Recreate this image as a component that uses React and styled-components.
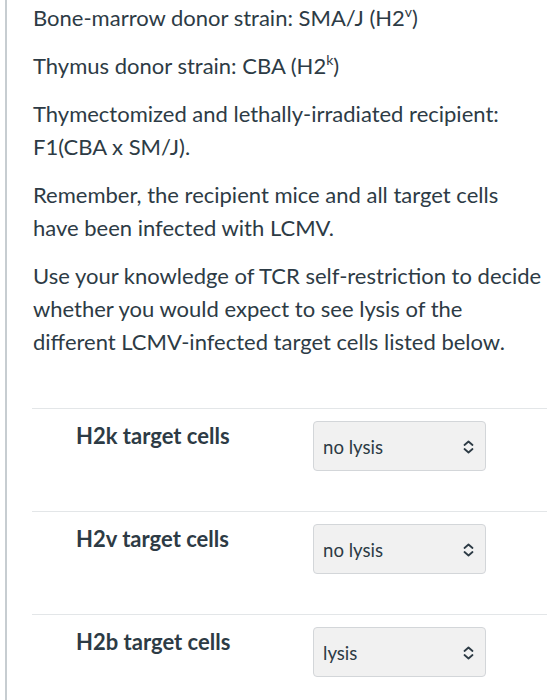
import React from "react";
import styled, { createGlobalStyle } from "styled-components";

const Global = createGlobalStyle`
  html, body { margin: 0; padding: 0; background: #ffffff; }
  body { font-family: Lato, "Open Sans", "Liberation Sans", sans-serif; color: #2d3b45; }
`;

const Page = styled.div`
  padding-left: 5px;
  width: 557px;
  height: 700px;
  box-sizing: border-box;
  overflow: hidden;
`;

const Card = styled.div`
  border-left: 2px solid #c7cdd1;
  height: 100%;
  box-sizing: border-box;
  padding: 1px 10px 0 26px;
`;

const Para = styled.p`
  margin: 0 0 15px 0;
  font-size: 22px;
  line-height: 33px;
  color: #2d3b45;
  sup { font-size: 14px; line-height: 0; vertical-align: 9px; }
`;

const Table = styled.div`
  margin-top: 50px;
  margin-left: -1px;
`;

const Row = styled.div`
  display: grid;
  grid-template-columns: 281px 1fr;
  border-top: 1px solid #e3e6e8;
  height: 103px;
  box-sizing: border-box;
  padding-top: 12px;
`;

const Label = styled.div`
  padding-left: 44px;
  padding-top: 3px;
  font-size: 22px;
  font-weight: 700;
  line-height: 24px;
  color: #2d3b45;
`;

const Select = styled.div`
  width: 173px;
  height: 50px;
  box-sizing: border-box;
  background: #f1f1f1;
  border: 1px solid #d3d6d9;
  border-radius: 4px;
  display: flex;
  align-items: center;
  justify-content: space-between;
  padding: 2px 11px 0 9px;
  font-size: 18.6px;
  color: #2d3b45;
`;

const Chevron = () => (
  <svg width="11" height="14" viewBox="0 0 11 14" fill="none">
    <path d="M1.5 5 L5.5 1.5 L9.5 5" stroke="#2d3b45" strokeWidth="1.8" strokeLinecap="round" strokeLinejoin="round" />
    <path d="M1.5 9 L5.5 12.5 L9.5 9" stroke="#2d3b45" strokeWidth="1.8" strokeLinecap="round" strokeLinejoin="round" />
  </svg>
);

const rows = [
  { label: "H2k target cells", value: "no lysis" },
  { label: "H2v target cells", value: "no lysis" },
  { label: "H2b target cells", value: "lysis" },
];

export default function App() {
  return (
    <>
      <Global />
      <Page>
        <Card>
          <Para>Bone-marrow donor strain: SMA/J (H2<sup>v</sup>)</Para>
          <Para>Thymus donor strain: CBA (H2<sup>k</sup>)</Para>
          <Para>Thymectomized and lethally-irradiated recipient: F1(CBA x SM/J).</Para>
          <Para>Remember, the recipient mice and all target cells have been infected with LCMV.</Para>
          <Para>Use your knowledge of TCR self-restriction to decide whether you would expect to see lysis of the different LCMV-infected target cells listed below.</Para>
          <Table>
            {rows.map((r) => (
              <Row key={r.label}>
                <Label>{r.label}</Label>
                <div>
                  <Select>
                    <span>{r.value}</span>
                    <Chevron />
                  </Select>
                </div>
              </Row>
            ))}
          </Table>
        </Card>
      </Page>
    </>
  );
}
